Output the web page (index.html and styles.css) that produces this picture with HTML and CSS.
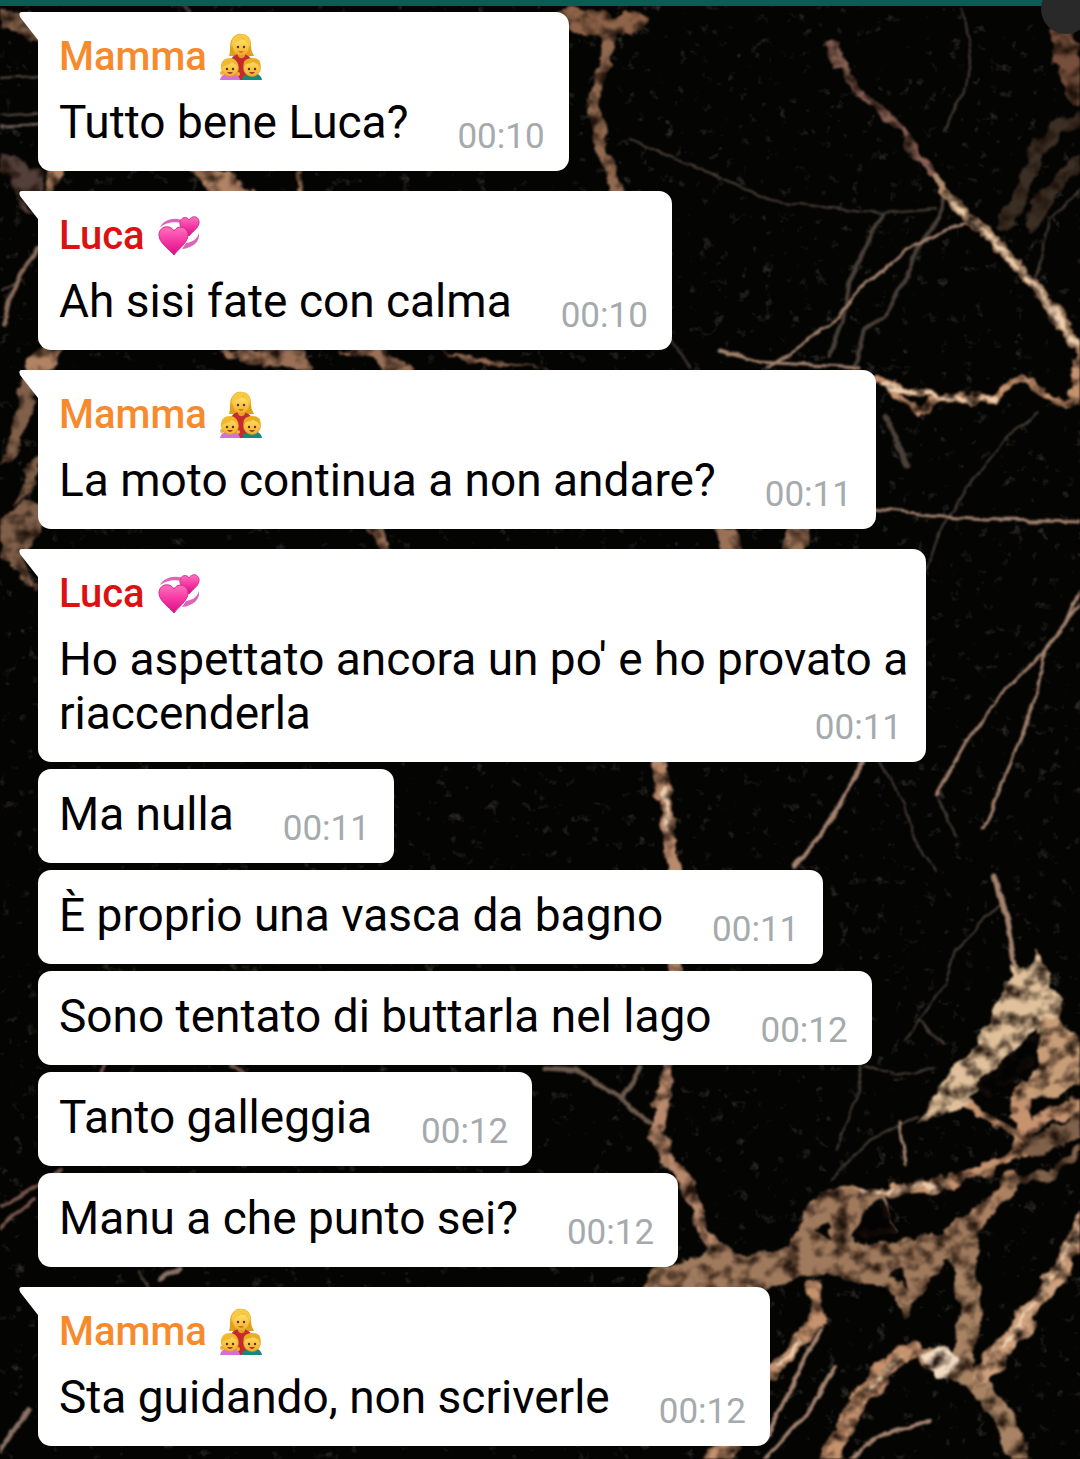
FILE: index.html
```
<!DOCTYPE html>
<html lang="it">
<head>
    <meta charset="UTF-8">
    <meta name="viewport" content="width=device-width, initial-scale=1.0">
    <title>Chat di famiglia</title>
    <link rel="stylesheet" href="styles.css">
</head>
<body>
    <!-- Marble wallpaper -->
    <svg class="wallpaper" viewBox="0 0 1080 1459" preserveAspectRatio="xMidYMin slice" aria-hidden="true">
        <defs>
            <filter id="rough" x="0" y="0" width="1080" height="1459" filterUnits="userSpaceOnUse" color-interpolation-filters="sRGB">
                <feTurbulence type="fractalNoise" baseFrequency="0.05" numOctaves="4" seed="4" result="noise"/>
                <feDisplacementMap in="SourceGraphic" in2="noise" scale="16" xChannelSelector="R" yChannelSelector="G" result="veins"/>
                <feTurbulence type="fractalNoise" baseFrequency="0.06 0.07" numOctaves="4" seed="9"/>
                <feColorMatrix values="0 0 0 0 0.12  0 0 0 0 0.07  0 0 0 0 0.04  2.6 0 0 0 -1.1" result="holes"/>
                <feComposite in="holes" in2="veins" operator="in" result="shade"/>
                <feMerge>
                    <feMergeNode in="veins"/>
                    <feMergeNode in="shade"/>
                </feMerge>
                <feGaussianBlur stdDeviation="1"/>
            </filter>
            <filter id="crack" x="0" y="0" width="1080" height="1459" filterUnits="userSpaceOnUse" color-interpolation-filters="sRGB">
                <feTurbulence type="fractalNoise" baseFrequency="0.04" numOctaves="3" seed="7" result="noise"/>
                <feDisplacementMap in="SourceGraphic" in2="noise" scale="8" xChannelSelector="R" yChannelSelector="G"/>
                <feGaussianBlur stdDeviation="0.9"/>
            </filter>
            <filter id="grain" x="0" y="0" width="1080" height="1459" filterUnits="userSpaceOnUse" color-interpolation-filters="sRGB">
                <feTurbulence type="fractalNoise" baseFrequency="0.08" numOctaves="3" seed="21"/>
                <feColorMatrix values="0 0 0 0 0.45  0 0 0 0 0.43  0 0 0 0 0.38  0 4 0 0 -2.6"/>
            </filter>
        </defs>
        <rect width="1080" height="1459" fill="#040403"/>
        <rect width="1080" height="1459" filter="url(#grain)" opacity="0.35"/>

        <g filter="url(#crack)" fill="none" stroke-linecap="round" stroke-linejoin="round">
            <!-- faint cracks -->
            <g stroke="#4b4139" stroke-width="2">
                <path d="M630 140L690 165L770 200L830 208L880 214L935 209"/>
                <path d="M963 10L970 60L965 90L945 130"/>
                <path d="M880 215L865 250L850 280L843 320L830 355" stroke-width="4"/>
                <path d="M945 192L940 215L918 250L905 280L885 315L863 330L855 365" stroke-width="4"/>
                <path d="M1080 190L1050 220L1035 280"/>
                <path d="M1040 412L1005 440L965 490L945 520L927 570"/>
                <path d="M885 415L895 440L908 465" stroke-width="5"/>
                <path d="M880 762L903 800L913 840L935 870M937 795L955 835"/>
                <path d="M1000 905L955 950L945 985L905 1040M920 1020L945 1045M865 1065L895 1075L935 1068"/>
                <path d="M862 1060L855 1100L835 1150M920 1115L870 1140L830 1180"/>
                <path d="M640 1066L622 1095M545 1068L575 1070L620 1098L650 1122" stroke-width="5" stroke="#6c5a4c"/>
                <path d="M672 340L690 368M60 345L30 390M180 0L190 12M140 1270L150 1290"/>
                <path d="M0 78L38 76M0 115L38 112M2 290L20 280" stroke="#5b4c44"/>
            </g>

            <!-- thin veins -->
            <g stroke="#a5836f" stroke-width="3">
                <path d="M768 368L830 325L860 290L900 255L945 230L975 222"/>
                <path d="M720 350L760 362L860 368"/>
                <path d="M875 508L930 515L1000 520L1080 522"/>
                <path d="M1084 580L1065 625L1045 650L1000 695L965 745L937 795" stroke-width="3"/>
                <path d="M1084 600L1045 650L1035 700L1010 765L982 830"/>
                <path d="M863 762L830 820L795 868" stroke-width="4"/>
                <path d="M995 877L1008 925L1015 965" stroke-width="5"/>
                <path d="M900 1122L906 1165M880 1192L895 1232"/>
                <path d="M820 1330L790 1390L765 1440M835 1365L810 1410L765 1459M930 1420L880 1436L850 1459" stroke-width="4"/>
                <path d="M0 1207L25 1193L60 1172M0 1228L35 1200M105 1066L100 1076M232 1066L245 1076" stroke="#75554a" stroke-width="4"/>
                <path d="M0 1450L15 1430L28 1410M160 1280L180 1268" stroke="#8a7264" stroke-width="5"/>
                <path d="M4 325L10 300L20 275L38 248" stroke="#8a6c5a" stroke-width="4"/>
                <path d="M0 126L38 125" stroke="#75605a" stroke-width="3"/>
            </g>
        </g>

        <g filter="url(#rough)" fill="none" stroke-linecap="round" stroke-linejoin="round">
            <!-- wide veins -->
            <g stroke="#c6936f">
                <path d="M565 18L590 22L612 28L640 20" stroke-width="22" stroke="#8e6348"/>
                <path d="M610 30L608 55L598 80L592 103L598 130L606 160L617 195" stroke-width="12" stroke="#926a50"/>
                <path d="M832 42L836 56L849 79L874 107L902 129L916 154L934 176" stroke-width="8" stroke="#866052"/>
                <path d="M934 176L949 196L979 226L1014 261L1049 304L1088 359" stroke-width="10" stroke="#b38c6c"/>
                <path d="M1084 345L1076 395" stroke-width="12"/>
                <path d="M1062 30L1068 60L1080 95" stroke-width="24" stroke="#76503c"/>
                <path d="M1084 120L1060 125L1035 155L1025 190L1005 225M1080 160L1050 190L1030 225" stroke-width="16" stroke="#3c3026"/>
                <path d="M875 378L900 387L940 398L995 399L1010 384L1025 376L1060 404L1084 399" stroke-width="8"/>
                <path d="M894 390L920 414L932 400" stroke-width="7"/>
                <path d="M657 755L666 810L673 868L676 970L669 1066L661 1104L657 1134L667 1159L689 1184L697 1219L716 1249" stroke-width="12" stroke="#b98a6c"/>
                <path d="M950 1098L985 1115L1012 1135" stroke-width="7"/>
                <path d="M1024 1090L1019 1150" stroke-width="16"/>
                <path d="M1084 1104L1042 1120L1017 1132" stroke-width="13"/>
                <path d="M1084 1130L1032 1147L1002 1162L952 1182L902 1189L842 1194L817 1206" stroke-width="10"/>
                <path d="M1084 1120L1060 1135L1035 1145" stroke-width="20" stroke="#80624b"/>
                <path d="M1084 1145L1050 1175L1020 1180" stroke-width="7" stroke="#80624b"/>
                <path d="M1012 1182L987 1207L967 1232L952 1247" stroke-width="17" stroke="#ad8262"/>
                <path d="M960 1240L967 1290L970 1320L962 1360" stroke-width="23" stroke="#a88464"/>
                <path d="M927 1355L957 1370L987 1394L1007 1428L1022 1464" stroke-width="20" stroke="#a88464"/>
                <path d="M1086 1218L1062 1268L1032 1308L1007 1343L982 1375" stroke-width="18" stroke="#d0a27e"/>
                <path d="M1084 1244L1055 1279" stroke-width="5"/>
                <path d="M912 1349L882 1372L852 1412L827 1466" stroke-width="19"/>
                <path d="M814 1287L818 1322L797 1342L772 1374" stroke-width="13"/>
                <path d="M705 1464L730 1446" stroke-width="14"/>
            </g>

            <!-- stone patches -->
            <g stroke="none" fill="#a07a5d">
                <path d="M635 1294L660 1264L700 1258L715 1243L740 1254L790 1247L810 1205L830 1190L886 1192L864 1215L856 1242L890 1242L945 1234L952 1218L980 1217L976 1264L947 1262L924 1284L907 1319L897 1309L887 1284L860 1284L830 1274L800 1276L760 1290L700 1294Z"/>
                <path fill="#e0c19b" d="M1014 966L1026 969L1037 946L1046 974L1052 988L1063 998L1060 1019L1049 1022L1024 1044L1004 1066L979 1084L964 1108L917 1124L937 1094L947 1074L967 1054L987 1024L1002 994Z"/>
                <path fill="#c89e78" d="M1042 1018L1058 1018L1088 1050L1088 1082L1058 1096L1018 1099L1037 1064Z"/>
                <path fill="#f3dcc2" d="M920 1352L945 1347L962 1362L950 1382L934 1376Z"/>
                <path fill="#80604a" d="M0 8L30 14L42 42L26 36L0 28ZM0 520L24 500L44 505L42 534L22 552L42 596L22 580L0 556Z"/>
                <path fill="#80604a" d="M25 370L38 378L32 412L12 460L0 467L16 415ZM38 455L24 480L12 505L30 495L42 465Z"/>
                <path fill="#54403a" d="M0 150L18 152L26 174L46 172L42 192L24 192L0 170ZM10 180L18 184L34 216L24 214Z"/>
                <path fill="#b08363" d="M50 170L62 170L56 195L46 195ZM190 168L225 168L256 196L214 196ZM298 168L304 168L300 195L292 195ZM28 360L40 347L62 350L52 368L24 374Z"/>
                <path fill="#9a7057" d="M220 352L270 350L300 346L310 372L240 360ZM340 352L380 346L416 372L392 374L372 358ZM440 350L560 374L470 362Z"/>
                <path fill="#9a7057" d="M372 526L386 526L390 552L378 552ZM792 526L812 526L806 554L782 554ZM712 528L734 528L748 554L722 549Z"/>
            </g>

            <!-- highlights -->
            <g stroke="#ecd0b0" stroke-width="4">
                <path d="M954 201L979 226L1014 261L1049 304L1080 348M885 383L905 388L945 399L994 399"/>
                <path d="M1084 1222L1058 1270L1028 1310L1004 1345M900 1357L867 1394M860 1191L900 1188L942 1184"/>
                <path d="M800 1341L780 1364M664 790L669 830"/>
            </g>
            <g fill="#030303" stroke="none">
                <path d="M1037 1024L1038 1052L1017 1080L987 1097L970 1087L992 1070L1014 1052Z"/>
                <path d="M864 1214L884 1200L894 1234L856 1240ZM888 1278L902 1264L910 1284ZM814 1230L828 1226L828 1240Z"/>
            </g>
        </g>
    </svg>

    <!-- Shared sender emoji -->
    <svg class="sprite" aria-hidden="true">
        <defs>
            <linearGradient id="pink" x1="0" y1="0" x2="0" y2="1">
                <stop offset="0" stop-color="#ff72bd"/>
                <stop offset="0.5" stop-color="#f637a4"/>
                <stop offset="1" stop-color="#d90f83"/>
            </linearGradient>
            <linearGradient id="skin" x1="0" y1="0" x2="0" y2="1">
                <stop offset="0" stop-color="#ffe266"/>
                <stop offset="1" stop-color="#f3ac2c"/>
            </linearGradient>
        </defs>
        <symbol id="family" viewBox="0 0 42 48">
            <path d="M9 23C11 17 9 10 12 6C14 2 18 0 22 1C28 1 31 6 31 12C31 17 32 19 34 23Z" fill="#dfa01e"/>
            <path d="M11 47V27C12 23 16 21 21 21C27 21 31 24 32 28V47Z" fill="#c52b2e"/>
            <path d="M18 18H25V23C23 26 20 26 18 23Z" fill="#e5a027"/>
            <ellipse cx="21" cy="14" rx="8" ry="8" fill="url(#skin)"/>
            <path d="M12 15C13 9 20 9 23 5C25 9 29 10 30 15C32 6 28 1 21 1C14 1 10 7 12 15Z" fill="#f8c945"/>
            <circle cx="18" cy="14" r="1.2" fill="#57320f"/>
            <circle cx="24" cy="14" r="1.2" fill="#57320f"/>
            <path d="M18 18Q21 19 24 18Q21 21 18 18Z" fill="#a33a22"/>
            <path d="M0 47C1 42 5 40 10 40C15 40 19 42 20 47Z" fill="#d471d8"/>
            <path d="M22 47C23 42 27 40 32 40C37 40 41 42 42 47Z" fill="#16887e"/>
            <circle cx="2" cy="40" r="2" fill="#edb52d"/>
            <circle cx="18" cy="41" r="2" fill="#edb52d"/>
            <circle cx="10" cy="35" r="8.5" fill="url(#skin)" stroke="#dc9621" stroke-width="0.6"/>
            <circle cx="32" cy="35" r="8.5" fill="url(#skin)" stroke="#dc9621" stroke-width="0.6"/>
            <path d="M1 36C0 28 5 25 10 25C15 25 19 29 18 36C17 31 15 32 12 29C9 33 4 31 1 36Z" fill="#f1b92f"/>
            <path d="M24 34C22 28 27 25 32 25C38 25 42 28 40 35C38 30 36 31 33 29C29 32 26 29 24 34Z" fill="#e9ad22"/>
            <circle cx="7" cy="36" r="1.2" fill="#57320f"/>
            <circle cx="13" cy="36" r="1.2" fill="#57320f"/>
            <circle cx="29" cy="36" r="1.2" fill="#57320f"/>
            <circle cx="35" cy="36" r="1.2" fill="#57320f"/>
            <path d="M7 39H13Q10 43 7 39ZM29 39H35Q32 43 29 39Z" fill="#a33a22"/>
        </symbol>
        <symbol id="hearts" viewBox="0 0 42 40">
            <path d="M2 11C6 4 15 1 24 4L24 7C15 5 8 7 2 11Z" fill="#d968bb"/>
            <path d="M41 17C42 26 35 32 24 33L28 27C35 26 39 23 41 17Z" fill="#d968bb"/>
            <path d="M31 20C27 16 21 12 22 6C23 1 29 0 31 4C34 -1 40 0 41 5C42 11 35 15 31 20Z" fill="url(#pink)" stroke="#cf3a92"/>
            <path d="M16 39C11 33 1 27 1 19C1 10 12 8 16 15C20 8 30 11 30 19C30 27 20 33 16 39Z" fill="url(#pink)" stroke="#cf2b88"/>
        </symbol>
    </svg>

    <header class="app-bar"><span class="bar-dot"></span></header>

    <main class="chat">
        <article class="bubble first">
            <h2 class="sender mamma">Mamma <svg class="emoji family" role="img" aria-label="famiglia"><use href="#family"/></svg></h2>
            <p class="message">Tutto bene Luca?<time class="time">00:10</time></p>
        </article>

        <article class="bubble first">
            <h2 class="sender luca">Luca <svg class="emoji hearts" role="img" aria-label="cuori"><use href="#hearts"/></svg></h2>
            <p class="message">Ah sisi fate con calma<time class="time">00:10</time></p>
        </article>

        <article class="bubble first">
            <h2 class="sender mamma">Mamma <svg class="emoji family" role="img" aria-label="famiglia"><use href="#family"/></svg></h2>
            <p class="message">La moto continua a non andare?<time class="time">00:11</time></p>
        </article>

        <article class="bubble first">
            <h2 class="sender luca">Luca <svg class="emoji hearts" role="img" aria-label="cuori"><use href="#hearts"/></svg></h2>
            <p class="message">Ho aspettato ancora un po' e ho provato a riaccenderla<time class="time">00:11</time></p>
        </article>
        <article class="bubble">
            <p class="message">Ma nulla<time class="time">00:11</time></p>
        </article>
        <article class="bubble">
            <p class="message">È proprio una vasca da bagno<time class="time">00:11</time></p>
        </article>
        <article class="bubble">
            <p class="message">Sono tentato di buttarla nel lago<time class="time">00:12</time></p>
        </article>
        <article class="bubble">
            <p class="message">Tanto galleggia<time class="time">00:12</time></p>
        </article>
        <article class="bubble">
            <p class="message">Manu a che punto sei?<time class="time">00:12</time></p>
        </article>

        <article class="bubble first">
            <h2 class="sender mamma">Mamma <svg class="emoji family" role="img" aria-label="famiglia"><use href="#family"/></svg></h2>
            <p class="message">Sta guidando, non scriverle<time class="time">00:12</time></p>
        </article>
    </main>
</body>
</html>
```
FILE: styles.css
```
* { box-sizing: border-box; }
body { position: relative; margin: 0; background: #050504; color: #000; font-family: Roboto, sans-serif; overflow-x: hidden; }
.wallpaper { position: absolute; top: 0; left: 0; width: 100%; height: 100%; z-index: -1; }
.sprite { position: absolute; width: 0; height: 0; }

.app-bar { position: relative; height: 6px; background: #075f54; }
.bar-dot { position: absolute; top: -16px; right: -11px; width: 50px; height: 50px; border-radius: 50%; background: #292929; }

.chat { display: flex; flex-direction: column; align-items: flex-start; gap: 7px; padding: 6px 154px 13px 38px; }
.bubble { position: relative; max-width: 100%; padding: 18px 16px 22px 21px; border-radius: 13px; background: #fff; }
.bubble.first { border-top-left-radius: 0; }
.bubble + .first { margin-top: 13px; }
.first::before { content: ""; position: absolute; top: 0; left: -19px; width: 20px; height: 29px; background: #fff; clip-path: path("M3 0H20V29L19 28L1 5Q-1 0 3 0Z"); }

.sender { margin: 0; padding: 1px 0 12px; font-size: 40px; font-weight: 500; line-height: 52px; }
.mamma { color: #f68a2c; }
.luca { color: #dc1212; }
.emoji { width: 42px; margin-left: 3px; }
.family { height: 48px; margin-top: -9px; vertical-align: -11px; }
.hearts { height: 40px; vertical-align: -7px; }

.message { margin: 0; font-size: 46px; line-height: 54px; }
.time { float: right; margin: 21px 8px -9px 49px; color: #a5aaad; font-size: 35px; line-height: 42px; }
```
